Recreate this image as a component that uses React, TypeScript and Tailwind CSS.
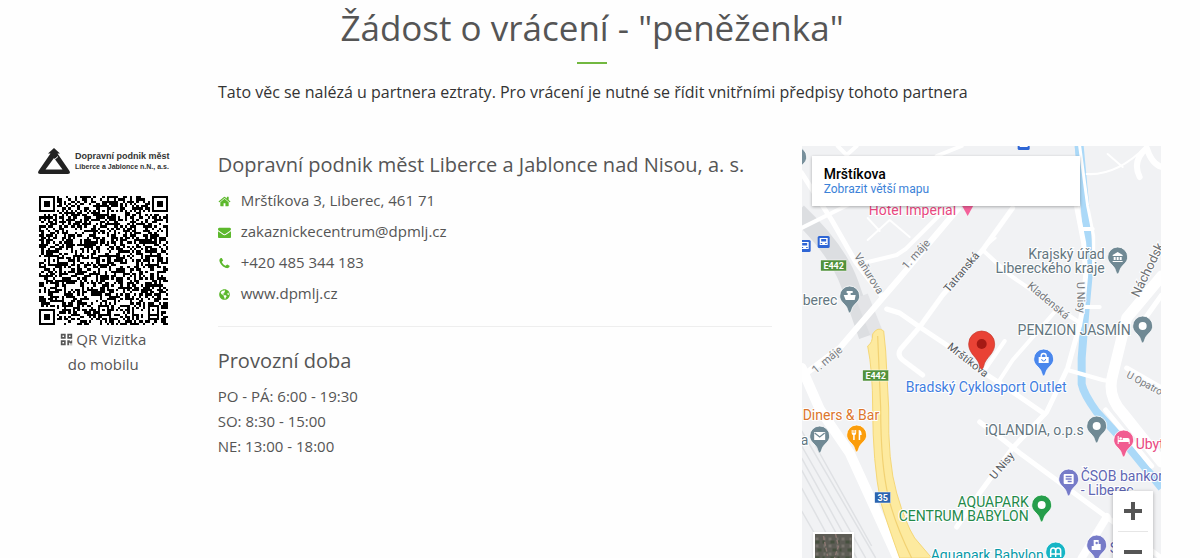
import type { ReactNode } from "react";
import { FaGlobeAmericas, FaQrcode } from "react-icons/fa";

const contactIcons = {
  home: "M1472 992v480q0 26-19 45t-45 19h-384v-384h-256v384h-384q-26 0-45-19t-19-45v-480q0-1 .5-3t.5-3l575-474 575 474q1 2 1 6zm223-69l-62 74q-8 9-21 11h-3q-13 0-21-7l-692-577-692 577q-12 8-24 7-13-2-21-11l-62-74q-8-10-7-23.5t11-21.5l719-599q32-26 76-26t76 26l244 204v-195q0-14 9-23t23-9h192q14 0 23 9t9 23v408l219 182q10 8 11 21.5t-7 23.5z",
  mail: "M1792 710v794q0 66-47 113t-113 47h-1472q-66 0-113-47t-47-113v-794q44 49 101 87 362 246 497 345 57 42 92.5 65.5t94.5 48 110 24.5h2q51 0 110-24.5t94.5-48 92.5-65.5q170-123 498-345 57-39 100-87zm0-294q0 79-49 151t-122 123q-376 261-468 325-10 7-42.5 31t-54 38.5-52 32.5-57.5 27-50 9h-2q-23 0-50-9t-57.5-27-52-32.5-54-38.5-42.5-31q-91-64-262-182.5t-205-142.5q-62-42-117-115.5t-55-136.5q0-78 41.5-130t118.5-52h1472q65 0 112.5 47t47.5 113z",
  phone:
    "M1600 1240q0 27-10 70.5t-21 68.5q-21 50-122 106-94 51-186 51-27 0-52.5-3.5t-57.5-12.5-47.5-14.5-55.5-20.5-49-18q-98-35-175-83-128-79-264.5-215.5t-215.5-264.5q-48-77-83-175-3-9-18-49t-20.5-55.5-14.5-47.5-12.5-57.5-3.5-52.5q0-92 51-186 56-101 106-122 25-11 68.5-21t70.5-10q14 0 21 3 18 6 53 76 11 19 30 54t35 63.5 31 53.5q3 4 17.5 25t21.5 35.5 7 28.5q0 20-28.5 50t-62 55-62 53-28.5 46q0 9 5 22.5t8.5 20.5 14 24 11.5 19q76 137 174 235t235 174q2 1 19 11.5t24 14 20.5 8.5 22.5 5q18 0 46-28.5t53-62 55-62 50-28.5q14 0 28.5 7t35.5 21.5 25 17.5q25 15 53.5 31t63.5 35 54 30q70 35 76 53 3 7 3 21z",
};

const openingHours = ["PO - PÁ: 6:00 - 19:30", "SO: 8:30 - 15:00", "NE: 13:00 - 18:00"];

const QR_SIZE = 57;

function ring(dx: number, dy: number, radius: number) {
  const d = Math.max(Math.abs(dx), Math.abs(dy));
  return d === radius || d <= radius - 2;
}

// version 10 symbol: three finders, alignment marks on 6/28/50, timing lines
function buildQrPath() {
  const finders = [[3, 3], [53, 3], [3, 53]];
  const marks = [[28, 6], [6, 28], [28, 28], [50, 28], [28, 50], [50, 50]];
  let seed = 20485;
  let path = "";

  for (let y = 0; y < QR_SIZE; y++) {
    for (let x = 0; x < QR_SIZE; x++) {
      seed = (seed * 1103515245 + 12345) % 2147483648;
      let dark = seed / 2147483648 < 0.5;
      if (x === 6 || y === 6) dark = (x + y) % 2 === 0;
      for (const [cx, cy] of finders) {
        const d = Math.max(Math.abs(x - cx), Math.abs(y - cy));
        if (d <= 4) dark = d === 3 || d <= 1;
      }
      for (const [cx, cy] of marks) {
        if (Math.abs(x - cx) <= 2 && Math.abs(y - cy) <= 2) dark = ring(x - cx, y - cy, 2);
      }
      if (dark) path += `M${x} ${y}h1v1h-1z`;
    }
  }
  return path;
}

const qrPath = buildQrPath();

function ContactIcon({ name }: { name: keyof typeof contactIcons }) {
  return (
    <svg viewBox="0 0 1792 1792" className="h-[13px] w-[13px] fill-current" aria-hidden="true">
      <path d={contactIcons[name]} />
    </svg>
  );
}

function ContactRow({ icon, children }: { icon: ReactNode; children: ReactNode }) {
  return (
    <li className="flex items-center gap-[10px]">
      <span className="flex w-[13px] justify-center pt-[2px] text-[#5cb82c]">{icon}</span>
      {children}
    </li>
  );
}

function CompanyLogo() {
  return (
    <div className="flex items-center gap-1">
      <svg viewBox="0 0 34 26" className="h-[26px] w-[34px]" aria-hidden="true">
        <path
          d="M17 0l6 5.500h-2.500l12 17.500q1.500 3-2 3H3.500q-3.500 0-2-3L13.500 5.500H11zM17 10L8.500 21.500h17z"
          fill="#222"
          fillRule="evenodd"
        />
        <path d="M21 8.500l-4 3.500" stroke="#fff" strokeWidth="1" />
      </svg>
      <p className="whitespace-nowrap font-['Liberation_Sans',sans-serif] font-bold text-[#333]">
        <span className="block text-[9px] leading-[11px]">Dopravní podnik měst</span>
        <span className="block text-[7px] leading-[10px]">Liberce a Jablonce n.N., a.s.</span>
      </p>
    </div>
  );
}

type PinProps = { x: number; y: number; color: string; children?: ReactNode };

// x, y is the centre of the pin's head
function Pin({ x, y, color, children }: PinProps) {
  return (
    <g transform={`translate(${x} ${y})`}>
      <path
        d="M0-10a10 10 0 0 1 10 10c0 5-4 7-6.500 10.500C2 12.500 1.500 17 0 17s-2-4.500-3.500-6.500C-6 7-10 5-10 0A10 10 0 0 1 0-10z"
        fill={color}
        stroke="#fff"
        strokeWidth="0.8"
      />
      {children ?? <circle r="4" fill="#fff" />}
    </g>
  );
}

const roads = [
  { d: "M0 27L30 74L54 116L80 150", w: 5 },
  { d: "M0 82L48 58M36 0L45 9L55 0M135 10L160 0", w: 4 },
  { d: "M58 118L95 109L104 103L145 62", w: 4 },
  { d: "M157 62L98 132L38 202L2 229", w: 6 },
  { d: "M211 62L181 104L141 149L118 181L99 203Q95 209 101 214L121 229", w: 5 },
  { d: "M181 104L208 129L250 158L277 176", w: 4 },
  { d: "M85 163L98 167L118 181L145 199L181 226L198 237L243 268", w: 5 },
  { d: "M253 166L211 214L198 234M203 195L183 224", w: 4 },
  { d: "M275 61L282 97L284 129L281 162L278 179L266 222L245 266L211 302L178 347L155 381", w: 5 },
  { d: "M266 224L301 234L312 236M281 161L298 161M279 83L291 83", w: 4 },
  { d: "M278 0L286 60L292 90L292 128", w: 3 },
  { d: "M178 276L198 291L218 307L305 371L360 412", w: 5 },
  { d: "M305 371L280 412", w: 8 },
  { d: "M360 130L325 172L311 229Q305 250 321 267L360 316", w: 11 },
  { d: "M360 149L338 180M325 222L360 242M304 264L350 320", w: 5 },
  { d: "M338 31Q330 15 345 2Q350 18 360 21", w: 6 },
  { d: "M285 28Q315 30 345 0M306 8L321 21", w: 2 },
  { d: "M0 222L18 263L48 307L96 412", w: 10 },
  { d: "M66 94L88 74L108 91M78 85L66 72M180 104L194 92", w: 2 },
];

const streetNames = [
  { text: "Vaňurova", x: 52, y: 110, rotate: 58 },
  { text: "1. máje", x: 105, y: 124, rotate: -48 },
  { text: "Tatranská", x: 147, y: 147, rotate: -50, dark: true },
  { text: "Kladenská", x: 225, y: 141, rotate: 40 },
  { text: "1. máje", x: 14, y: 228, rotate: -40 },
  { text: "Mrštíkova", x: 145, y: 202, rotate: 38, dark: true },
  { text: "U Nisy", x: 275, y: 136, rotate: 88 },
  { text: "U Nisy", x: 193, y: 334, rotate: -50, dark: true },
  { text: "U Opatro", x: 324, y: 231, rotate: 28, size: 10 },
];

const places = [
  { lines: ["Hotel Imperial"], x: 67, y: 69, color: "#e8487f" },
  { lines: ["Krajský úřad", "Libereckého kraje"], x: 303, y: 113, anchor: "end", color: "#637680" },
  { lines: ["berec"], x: 1, y: 159, color: "#637680" },
  { lines: ["PENZION JASMÍN"], x: 329, y: 189, anchor: "end", color: "#637680" },
  { lines: ["Bradský Cyklosport Outlet"], x: 104, y: 246, color: "#3f7de0" },
  { lines: ["Diners & Bar"], x: 1, y: 274, color: "#dc762c" },
  { lines: ["a"], x: -1, y: 299, color: "#637680" },
  { lines: ["iQLANDIA, o.p.s"], x: 282, y: 289, anchor: "end", color: "#637680" },
  { lines: ["Ubyt"], x: 334, y: 303, color: "#e8487f" },
  { lines: ["ČSOB bankom", "- Liberec"], x: 279, y: 335, color: "#6066b3" },
  { lines: ["AQUAPARK", "CENTRUM BABYLON"], x: 227, y: 361, anchor: "end", color: "#23894a" },
  { lines: ["Aquapark Babylon"], x: 129, y: 414, color: "#079aa8" },
  { lines: ["S"], x: 308, y: 407, color: "#6066b3" },
] as const;

function RoadSign({ x, y, label, color }: { x: number; y: number; label: string; color: string }) {
  const width = label.length > 2 ? 26 : 16;
  return (
    <g transform={`translate(${x} ${y})`}>
      <rect width={width} height="11" fill={color} stroke="#fff" strokeWidth="0.5" />
      <text x={width / 2} y="9" textAnchor="middle" fontSize="9" fontWeight="700" fill="#fff">
        {label}
      </text>
    </g>
  );
}

function BusStop({ x, y }: { x: number; y: number }) {
  return (
    <g transform={`translate(${x} ${y})`}>
      <rect width="12" height="12" rx="1.500" fill="#2f66d5" />
      <path d="M2 2h8v7H2z" fill="#fff" />
      <path d="M3.500 3h5v2.500h-5zM3 7h1.500v1H3zM7.500 7H9v1H7.500zM2.500 9h2v1h-2zM7.500 9h2v1h-2z" fill="#2f66d5" />
    </g>
  );
}

function MapDrawing() {
  return (
    <svg
      viewBox="0 0 360 412"
      preserveAspectRatio="xMidYMid slice"
      className="block h-full w-full font-[Roboto,sans-serif]"
      role="img"
      aria-label="Mapa"
    >
      <rect width="360" height="412" fill="#f1f2f4" />

      {/* railway yard */}
      <g fill="none" stroke="#dfe1e4" strokeWidth="1.500">
        <path d="M0 300L64 412M0 312L55 412M0 324L48 412M0 342L38 412M0 365L27 412M0 285L74 412M14 300L70 400" />
      </g>
      <path d="M-4 66Q36 104 48 138L66 190" fill="none" stroke="#dcdee1" strokeWidth="18" />
      <path d="M60 150L76 190" fill="none" stroke="#e3e4e7" strokeWidth="13" />

      {/* river */}
      <path
        d="M277 0L283 61L286 94L287 129L284 162L280 212L280 238Q282 248 295 266L321 294L360 342"
        fill="none"
        stroke="#abd9f8"
        strokeWidth="8"
      />
      <path d="M273 0h9l7 75l-6 10z" fill="#abd9f8" />

      <g fill="none" stroke="#fff" strokeLinecap="round" strokeLinejoin="round">
        {roads.map(({ d, w }) => (
          <path key={d} d={d} strokeWidth={w} />
        ))}
      </g>

      {/* expressway */}
      <path
        d="M66 200Q71 197 71 188Q76 180 82 185L84 205L87 262Q86 316 95 347Q104 378 113 392L130 412H98Q85 376 79 356Q71 316 71 262Q71 225 66 200z"
        fill="#fdea9f"
        stroke="#f5d776"
        strokeWidth="1"
      />
      <path d="M76 190L79 262Q79 320 87 352Q94 380 110 412" fill="none" stroke="#f2d273" strokeWidth="1.200" />

      {streetNames.map(({ text, x, y, rotate, dark, size }) => (
        <text
          key={`${text}-${x}`}
          transform={`translate(${x} ${y}) rotate(${rotate})`}
          fontSize={size ?? 11}
          fill={dark ? "#55585c" : "#777a7e"}
          stroke="#f8f9fa"
          strokeWidth="2"
          paintOrder="stroke"
        >
          {text}
        </text>
      ))}
      <text transform="translate(337 152) rotate(-64)" fontSize="13" fill="#6d7073" stroke="#fff" strokeWidth="2" paintOrder="stroke">
        Náchodsk
      </text>

      <RoadSign x={19} y={114} label="E442" color="#52923c" />
      <RoadSign x={61} y={224} label="E442" color="#52923c" />
      <RoadSign x={73} y={346} label="35" color="#2c65b0" />
      <BusStop x={16} y={90} />
      <BusStop x={-3} y={94} />
      <BusStop x={216} y={-8} />

      {places.map((place) => (
        <text
          key={place.lines[0]}
          fontSize="14"
          textAnchor={"anchor" in place ? place.anchor : "start"}
          fill={place.color}
          stroke="#fff"
          strokeWidth="2"
          paintOrder="stroke"
        >
          {place.lines.map((line, i) => (
            <tspan key={line} x={place.x} y={place.y + i * 14}>
              {line}
            </tspan>
          ))}
        </text>
      ))}

      <Pin x={-5} y={11} color="#78909c" />
      <path d="M160 59h12l-6 11z" fill="#f4619a" />
      <Pin x={48} y={150} color="#708994">
        <path d="M-3-5h6v2h-2v2h5l-1 5h-9l-2-5h4v-2h-1z" fill="#fff" />
      </Pin>
      <Pin x={316} y={111} color="#708994">
        <path d="M-5-2l5-3 5 3v1H-5zM-4 0h2v3h-2zM-1 0h2v3h-2zM2 0h2v3H2zM-5 4H5v1H-5z" fill="#fff" />
      </Pin>
      <Pin x={341} y={180} color="#708994" />
      <Pin x={242} y={213} color="#4a87ec">
        <path d="M-5-2H5v6H-5z" fill="#fff" />
        <path d="M-2.500-2v-1a2.500 2.500 0 0 1 5 0v1" fill="none" stroke="#fff" strokeWidth="1.300" />
        <path d="M-2 0a2 2 0 0 0 4 0" fill="none" stroke="#4a87ec" />
      </Pin>
      <Pin x={18} y={290} color="#708994">
        <path d="M-5.500-4h11v8h-11z" fill="#fff" />
        <path d="M-5-3L0 1L5-3" fill="none" stroke="#708994" strokeWidth="1.300" />
      </Pin>
      <Pin x={55} y={289} color="#fb9d0b">
        <path d="M-5-5v3q0 2 1.500 2v5h1.500V0Q-.500 0-.500-2v-3h-1v3h-.7v-3h-1v3h-.8v-3zM2 5V-5q3 0 3 5H3.500v5z" fill="#fff" />
      </Pin>
      <Pin x={295} y={280} color="#708994" />
      <Pin x={322} y={294} color="#f15c91">
        <path d="M-6-4v8h1V2H5v2h1V0q0-2-2-2H-1v2h-4v-4z" fill="#fff" />
        <circle cx="-3" cy="-1.500" r="1.300" fill="#fff" />
      </Pin>
      <Pin x={267} y={333} color="#767bc8">
        <rect x="-5" y="-5" width="10" height="10" rx="1" fill="#fff" />
        <path d="M-3-2.500h6M-3 0h6M-1 2.500h4" stroke="#767bc8" strokeWidth="1.300" />
      </Pin>
      <Pin x={240} y={359} color="#269e4b" />
      <Pin x={254} y={406} color="#16b5c5">
        <path d="M-5 5v-6q0-3 2.500-3T0-1v6M0-1q0-3 2.500-3T5-1v6M-5 2H5" fill="none" stroke="#fff" strokeWidth="1.500" />
      </Pin>
      <Pin x={295} y={399} color="#767bc8">
        <path d="M-3-5h5v4h2v6h-9V1h2z" fill="#fff" />
        <circle cy="-2" r="1.200" fill="#767bc8" />
      </Pin>

      <path
        d="M180 185a13 13 0 0 1 13 13c0 8-6 12-9 17-2 3-2 8-4 8s-2-5-4-8c-3-5-9-9-9-17a13 13 0 0 1 13-13z"
        fill="#e94235"
        stroke="#c5392d"
        strokeWidth="0.700"
      />
      <circle cx="180" cy="198" r="5" fill="#a51a14" />
    </svg>
  );
}

function MapPanel() {
  return (
    <div className="relative h-[412px] overflow-hidden font-[Roboto,sans-serif]">
      <MapDrawing />

      <div className="absolute left-[10px] top-[10px] h-[50px] w-[268px] bg-white px-3 py-[10px] shadow-[0_1px_3px_rgba(0,0,0,0.3)]">
        <p className="text-sm font-medium leading-4 text-black">Mrštíkova</p>
        <a href="#mapa" className="block text-xs leading-[14px] text-[#3b82d8]">
          Zobrazit větší mapu
        </a>
      </div>

      <button
        type="button"
        aria-label="Satelitní mapa"
        className="absolute left-[11px] top-[386px] h-10 w-[41px] border-2 border-white bg-[#5d5c55] shadow"
      >
        <svg viewBox="0 0 36 36" className="h-full w-full" aria-hidden="true">
          <g strokeWidth="3" fill="none">
            <path d="M0 5h36M0 12h36M0 20h36" stroke="#77736c" strokeDasharray="3 5 2 3" />
            <path d="M0 8h36M2 16h34M0 24h36" stroke="#46503f" strokeDasharray="4 3 2 6" />
            <path d="M20 0l3 12-4 12M8 2l4 20" stroke="#8b7772" strokeWidth="1.500" strokeDasharray="4 2" />
          </g>
        </svg>
      </button>

      <div className="absolute left-[311px] top-[345px] w-10 bg-white shadow-[0_1px_4px_rgba(0,0,0,0.3)]">
        <button type="button" aria-label="Přiblížit" className="flex h-10 w-full items-center justify-center">
          <svg viewBox="0 0 18 18" className="h-[18px] w-[18px]" aria-hidden="true">
            <path d="M9 0v18M0 9h18" stroke="#555" strokeWidth="4" />
          </svg>
        </button>
        <div className="mx-[5px] h-px bg-[#e6e6e6]" />
        <button type="button" aria-label="Oddálit" className="flex h-10 w-full items-center justify-center">
          <svg viewBox="0 0 18 18" className="h-[18px] w-[18px]" aria-hidden="true">
            <path d="M0 9h18" stroke="#555" strokeWidth="4" />
          </svg>
        </button>
      </div>
    </div>
  );
}

export default function App() {
  return (
    <main className="bg-[#fefefe] pl-2 pr-6 font-['Open_Sans',sans-serif] text-[15px] text-[#555]">
      <div className="mx-auto max-w-[1170px]">
        <header className="flex flex-col items-center pt-1">
          <h1 className="text-[35px] leading-[48px]">Žádost o vrácení - "peněženka"</h1>
          <div className="mt-[10px] h-[2px] w-[30px] bg-[#72b840]" />
        </header>

        <p className="mt-4 pl-[210px] text-base leading-6 text-[#333]">
          Tato věc se nalézá u partnera eztraty. Pro vrácení je nutné se řídit vnitřními předpisy tohoto partnera
        </p>

        <div className="mt-[42px] grid grid-cols-12">
          <aside className="col-span-2 flex flex-col items-center pl-3 pr-4 pt-[2px]">
            <CompanyLogo />
            <svg
              viewBox="0 0 57 57"
              className="mt-[22px] h-[129px] w-[129px]"
              shapeRendering="crispEdges"
              role="img"
              aria-label="QR Vizitka"
            >
              <path d={qrPath} />
            </svg>
            <p className="mt-[2px] text-center leading-[25px]">
              <FaQrcode className="mr-[3px] inline h-[13px] w-[13px] align-[-1px]" />
              QR Vizitka
              <br />
              do mobilu
            </p>
          </aside>

          <section className="col-span-6 px-[15px] pt-[5px]">
            <h2 className="text-xl leading-7">Dopravní podnik měst Liberce a Jablonce nad Nisou, a. s.</h2>
            <ul className="mt-[9px] space-y-[6px] leading-[25px]">
              <ContactRow icon={<ContactIcon name="home" />}>Mrštíkova 3, Liberec, 461 71</ContactRow>
              <ContactRow icon={<ContactIcon name="mail" />}>
                <a href="mailto:zakaznickecentrum@dpmlj.cz">zakaznickecentrum@dpmlj.cz</a>
              </ContactRow>
              <ContactRow icon={<ContactIcon name="phone" />}>+420 485 344 183</ContactRow>
              <ContactRow icon={<FaGlobeAmericas className="h-[11px] w-[11px]" />}>
                <a href="#web">www.dpmlj.cz</a>
              </ContactRow>
            </ul>

            <hr className="mt-5 border-[#eee]" />

            <h2 className="mt-5 text-xl leading-7">Provozní doba</h2>
            <div className="mt-[9px] leading-[25px]">
              {openingHours.map((line) => (
                <p key={line}>{line}</p>
              ))}
            </div>
          </section>

          <div className="col-span-4 px-[15px]">
            <MapPanel />
          </div>
        </div>
      </div>
    </main>
  );
}
